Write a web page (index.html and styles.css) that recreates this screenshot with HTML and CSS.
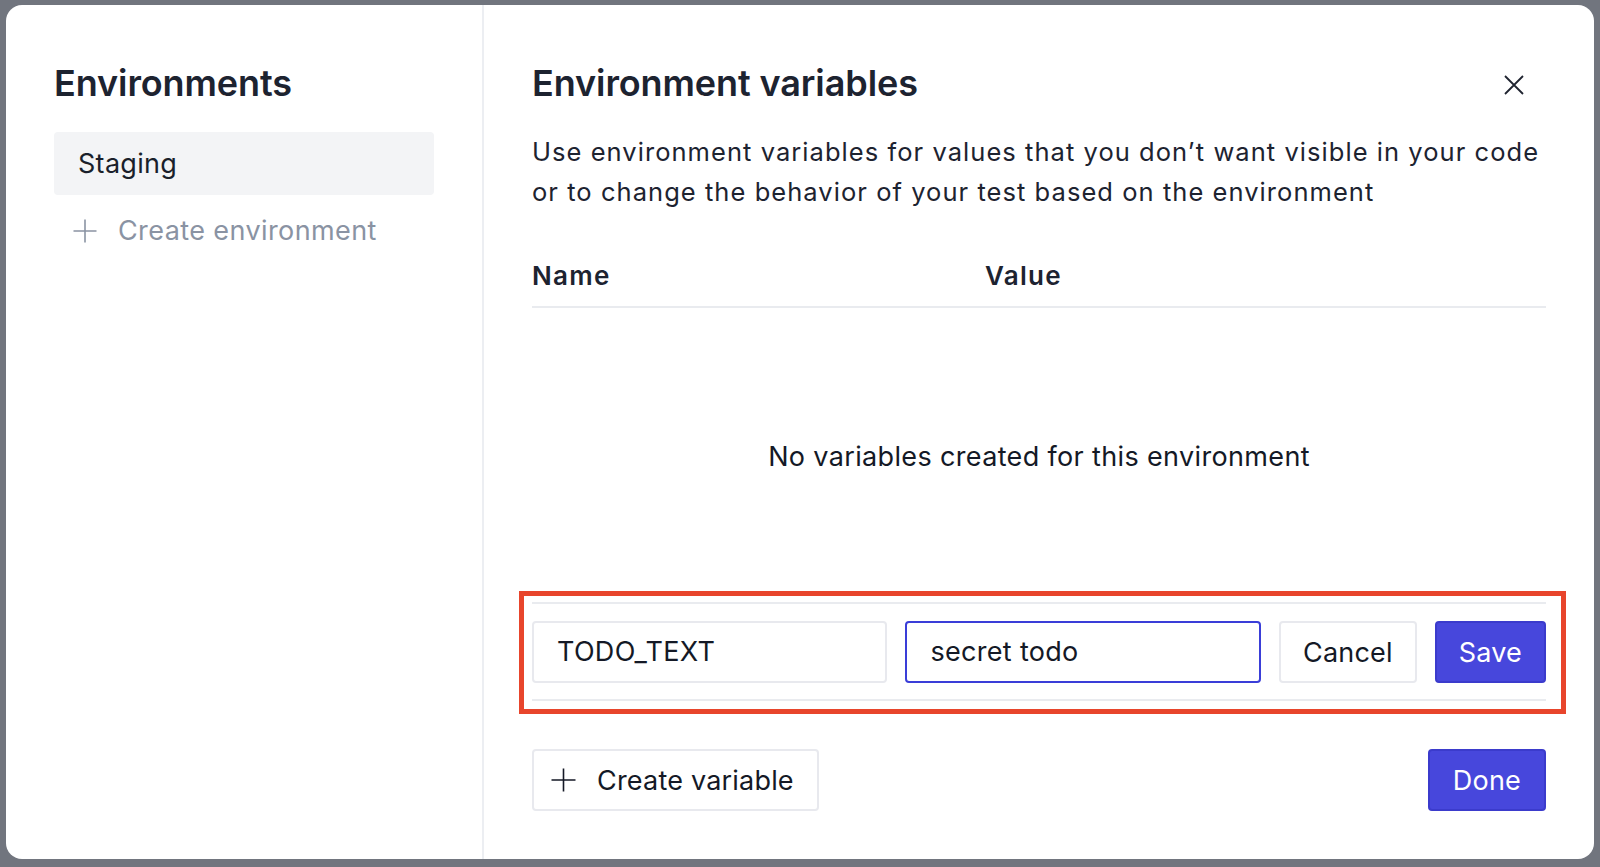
FILE: index.html
```html
<!DOCTYPE html>
<html lang="en">
<head>
<meta charset="utf-8">
<title>Environments</title>
<link rel="stylesheet" href="styles.css">
</head>
<body>
<div class="modal">
  <aside class="sidebar">
    <h2 class="title">Environments</h2>
    <div class="env-item">Staging</div>
    <div class="env-create">
      <svg class="plus" width="24" height="24" viewBox="0 0 24 24"><path d="M12 0.5V23.5M0.5 12H23.5" stroke="currentColor" stroke-width="1.6" fill="none"/></svg>
      <span>Create environment</span>
    </div>
  </aside>
  <main class="main">
    <div class="main-head">
      <h2 class="title">Environment variables</h2>
      <button class="close" aria-label="Close">
        <svg width="20" height="20" viewBox="0 0 20 20"><path d="M1 1L19 19M19 1L1 19" stroke="#1f2430" stroke-width="1.8" fill="none"/></svg>
      </button>
    </div>
    <p class="desc">Use environment variables for values that you don’t want visible in your code or to change the behavior of your test based on the environment</p>
    <div class="table-head">
      <span class="col-name">Name</span>
      <span class="col-value">Value</span>
    </div>
    <div class="empty">No variables created for this environment</div>
    <div class="edit-row">
      <div class="field">TODO_TEXT</div>
      <div class="field focused">secret todo</div>
      <button class="btn">Cancel</button>
      <button class="btn primary">Save</button>
      <div class="highlight"></div>
    </div>
    <div class="footer">
      <button class="btn with-icon">
        <svg class="plus" width="25" height="24" viewBox="0 0 25 24"><path d="M12.5 0.5V23.5M0.5 12H24.5" stroke="currentColor" stroke-width="1.6" fill="none"/></svg>
        <span>Create variable</span>
      </button>
      <button class="btn primary done">Done</button>
    </div>
  </main>
</div>
</body>
</html>
```

FILE: styles.css
```css
* { box-sizing: border-box; }
html, body { margin: 0; padding: 0; }
body {
  width: 1600px;
  height: 867px;
  background: #71757e;
  padding: 5px 6px 0 6px;
  font-family: Inter, "Noto Sans", sans-serif;
  color: #1a1f2b;
  overflow: hidden;
}
.modal {
  width: 1588px;
  height: 854px;
  background: #fff;
  border-radius: 16px;
  display: flex;
  overflow: hidden;
}
.sidebar {
  width: 478px;
  flex: none;
  border-right: 2px solid #eceef2;
  padding: 54px 48px 48px 48px;
  display: flex;
  flex-direction: column;
}
.title {
  margin: 0;
  font-size: 36px;
  line-height: 48px;
  font-weight: 600;
  color: #1d2330;
  letter-spacing: -0.1px;
}
.env-item {
  margin-top: 25px;
  height: 63px;
  line-height: 63px;
  background: #f3f4f6;
  border-radius: 4px;
  padding-left: 24px;
  font-size: 27px;
  letter-spacing: 0.3px;
  color: #1a1f2b;
}
.env-create {
  margin-top: 16px;
  display: flex;
  align-items: center;
  padding-left: 19px;
  gap: 21px;
  font-size: 27px;
  line-height: 40px;
  letter-spacing: 0.4px;
  color: #8a93a3;
}
.plus { flex: none; display: block; }
.main {
  flex: 1;
  padding: 54px 48px 48px 48px;
  display: flex;
  flex-direction: column;
  min-width: 0;
}
.main-head {
  display: flex;
  align-items: center;
  justify-content: space-between;
}
.close {
  border: 0;
  background: none;
  padding: 0;
  margin-right: 22px;
  width: 20px;
  height: 20px;
  margin-top: 3px;
  display: flex;
}
.desc {
  margin: 25px 0 0 0;
  font-size: 25.5px;
  line-height: 40px;
  letter-spacing: 1.05px;
  color: #1d2330;
}
.table-head {
  margin-top: 46px;
  display: flex;
  font-size: 26px;
  line-height: 36px;
  font-weight: 600;
  letter-spacing: 1.3px;
  padding-bottom: 12px;
  border-bottom: 2px solid #e9ebef;
  color: #1d2330;
}
.col-name { width: 453px; }
.empty {
  flex: 1;
  display: flex;
  align-items: center;
  justify-content: center;
  padding-top: 4px;
  font-size: 27px;
  line-height: 40px;
  letter-spacing: 0.35px;
  color: #141926;
}
.edit-row {
  position: relative;
  display: flex;
  gap: 18px;
  padding: 17px 0 16px 0;
  border-top: 2px solid #e9ebef;
  border-bottom: 2px solid #e9ebef;
}
.field {
  flex: 1;
  height: 62px;
  border: 2px solid #e8e9ee;
  border-radius: 4px;
  padding-left: 23px;
  font-size: 27px;
  line-height: 58px;
  letter-spacing: 0.3px;
  color: #141926;
}
.field.focused {
  border-color: #3a3ed8;
}
.btn {
  flex: none;
  height: 62px;
  padding: 0 22px;
  border: 2px solid #e8e9ee;
  border-radius: 4px;
  background: #fff;
  font-family: inherit;
  font-size: 27px;
  letter-spacing: 0.2px;
  color: #141926;
  display: flex;
  align-items: center;
}
.btn.primary {
  background: #4747dc;
  border-color: #3b3bcc;
  color: #fff;
}
.highlight {
  position: absolute;
  top: -13px;
  bottom: -15px;
  left: -13px;
  right: -20px;
  border: 5px solid #e8452c;
  pointer-events: none;
}
.footer {
  margin-top: 48px;
  display: flex;
  justify-content: space-between;
}
.btn.with-icon {
  padding: 0 23px 0 17px;
  gap: 21px;
}
.btn.done { padding: 0 23px; }
```
